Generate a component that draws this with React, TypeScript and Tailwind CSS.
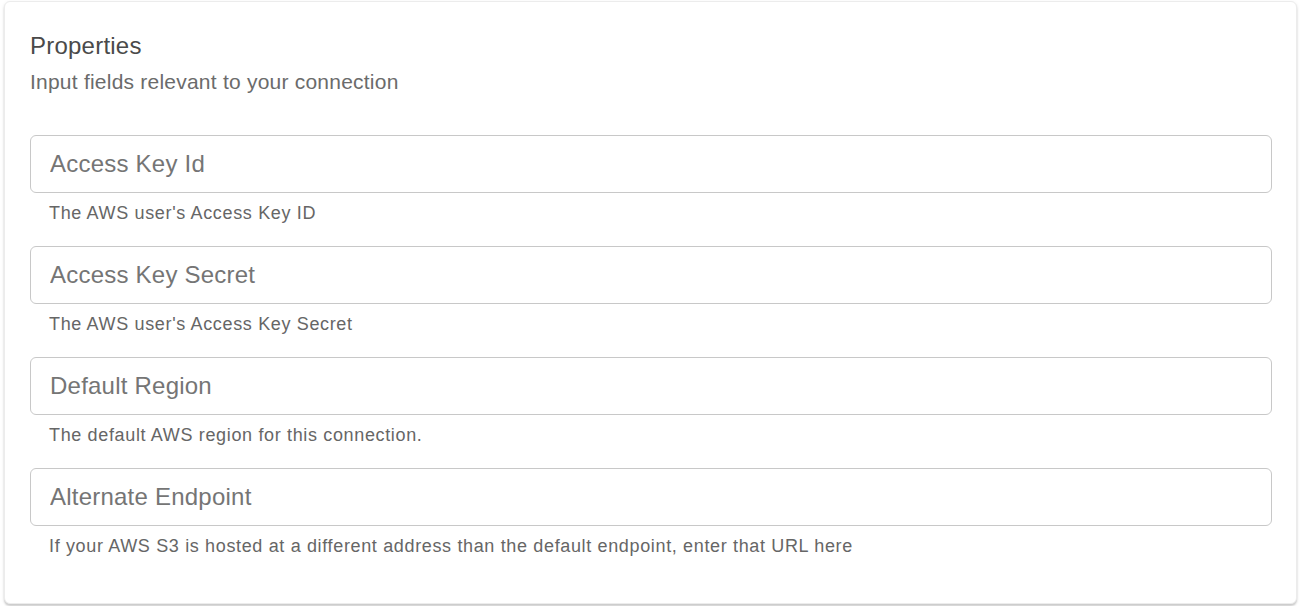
import React from "react";

const fields = [
  { label: "Access Key Id", help: "The AWS user's Access Key ID" },
  { label: "Access Key Secret", help: "The AWS user's Access Key Secret" },
  { label: "Default Region", help: "The default AWS region for this connection." },
  {
    label: "Alternate Endpoint",
    help: "If your AWS S3 is hosted at a different address than the default endpoint, enter that URL here",
  },
];

export default function App() {
  return (
    <div
      className="w-[1300px] h-[606px] bg-white pl-[4px] pr-[3px] pt-[1px] overflow-hidden"
      style={{ fontFamily: '"Liberation Sans", Arial, Helvetica, sans-serif' }}
    >
      <div className="h-[603px] bg-white rounded-[6px] border border-[#ececec] shadow-[0_2px_2px_0_rgba(0,0,0,0.18),0_1px_4px_0_rgba(0,0,0,0.06)] pl-[25px] pr-[24px] pt-[23px]">
        <div className="text-[24px] leading-[42px] tracking-[0.225px] text-[#4a4a4a]">Properties</div>
        <div className="text-[21px] leading-[30px] tracking-[0.225px] text-[#6b6b6b]">
          Input fields relevant to your connection
        </div>
        <div className="mt-[38px] flex flex-col">
          {fields.map((f) => (
            <div key={f.label} className="mb-[18px]">
              <input
                type="text"
                placeholder={f.label}
                className="w-full h-[58px] rounded-[6px] border border-[#c8c8c8] bg-white pl-[19px] pr-[19px] text-[24px] tracking-[0.225px] text-[#333] placeholder:text-[#757575] outline-none"
                style={{ fontFamily: '"Liberation Sans", Arial, Helvetica, sans-serif' }}
              />
              <div className="mt-[6px] pl-[19px] text-[18px] leading-[29px] tracking-[0.65px] text-[#666]">
                {f.help}
              </div>
            </div>
          ))}
        </div>
      </div>
    </div>
  );
}
